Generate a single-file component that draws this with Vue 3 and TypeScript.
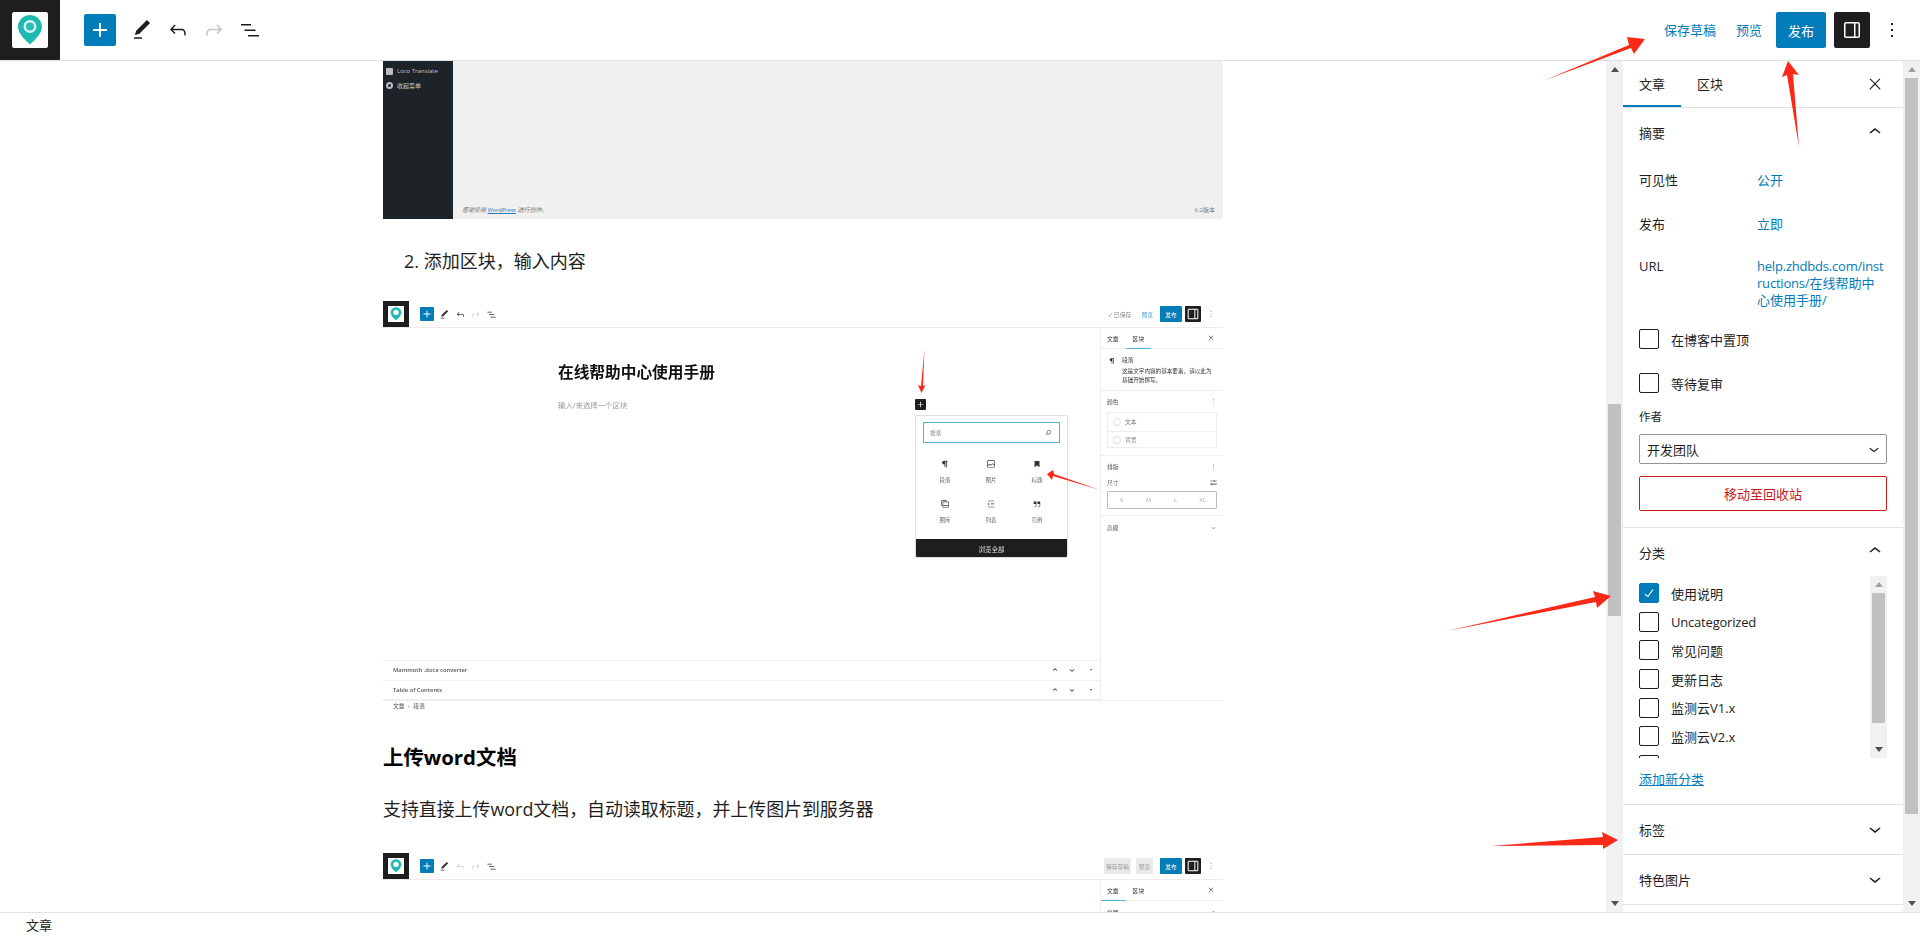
<script setup lang="ts">
const icons: Record<string, string> = {
  plus: 'M18 11.2h-5.2V6h-1.6v5.2H6v1.6h5.2V18h1.6v-5.2H18z',
  edit: 'M20.1 5.1L16.9 2 6.2 12.7l-1.3 4.4 4.5-1.3L20.1 5.1zM4 20.8h8v-1.5H4v1.5z',
  undo: 'M18.3 11.7c-.6-.6-1.4-.9-2.3-.9H6.7l2.9-3.3-1.1-1-4.5 5L8.5 16l1-1-2.7-2.7H16c.5 0 .9.2 1.3.5 1 1 1 3.4 1 4.5v.3h1.5v-.2c0-1.5 0-4.3-1.5-5.7z',
  redo: 'M15.6 6.5l-1.1 1 2.9 3.3H8c-.9 0-1.7.3-2.3.9-1.4 1.5-1.4 4.2-1.4 5.6v.2h1.5v-.3c0-1.1 0-3.5 1-4.5.3-.3.7-.5 1.3-.5h9.2L14.5 15l1.1 1.1 4.6-4.6-4.6-5z',
  list: 'M3 6h10v1.5H3V6zm3.5 5.500h11V13h-11v-1.500zM21 17H10v1.500h11V17z',
  panel: 'M18 4H6c-1.1 0-2 .9-2 2v12c0 1.1.9 2 2 2h12c1.1 0 2-.9 2-2V6c0-1.1-.9-2-2-2zm.5 14c0 .3-.2.5-.5.5H6c-.3 0-.5-.2-.5-.5V6c0-.3.2-.5.5-.5h8v13h1.5v-13H18c.3 0 .5.2.5.5v12z',
  kebab: 'M13 19h-2v-2h2v2zm0-6h-2v-2h2v2zm0-6h-2V5h2v2z',
  up: 'M6.5 12.4L12 8l5.5 4.4-.9 1.2L12 10l-4.5 3.6-1-1.2z',
  down: 'M17.5 11.6L12 16l-5.5-4.4.9-1.2L12 14l4.6-3.6 1 1.2z',
  close: 'M13 11.8l6.1-6.3-1-1-6.1 6.2-6.1-6.2-1 1 6.1 6.3-6.5 6.7 1 1 6.5-6.6 6.5 6.6 1-1z',
  check: 'M16.7 7.1l-6.3 8.5-3.3-2.5-.9 1.2 4.5 3.4L17.9 8z',
  search: 'M13 5c-3.3 0-6 2.7-6 6 0 1.4.5 2.7 1.3 3.7l-3.8 3.8 1 1 3.8-3.8c1 .8 2.3 1.3 3.7 1.3 3.3 0 6-2.7 6-6S16.3 5 13 5zm0 10.5c-2.5 0-4.5-2-4.5-4.5s2-4.5 4.5-4.5 4.5 2 4.5 4.5-2 4.5-4.5 4.5z',
  sliders: 'M3 7h10V5.5h2V7h6v1.5h-6V10h-2V8.5H3V7zm0 8.5h4V14h2v1.5h12V17H9v1.5H7V17H3v-1.5z',
  para: 'M18 4H9.5C7 4 5 6 5 8.5S7 13 9.5 13H11v7h2V6h2v14h2V6h1V4z',
  image: 'M19 3H5c-1.1 0-2 .9-2 2v14c0 1.1.9 2 2 2h14c1.1 0 2-.9 2-2V5c0-1.1-.9-2-2-2zM5 4.5h14c.3 0 .5.2.5.5v8.4l-3-2.9c-.3-.3-.8-.3-1 0L11.9 14 9 12c-.3-.2-.6-.2-.8 0l-3.6 2.6V5c-.1-.3.1-.5.4-.5zm14 15H5c-.3 0-.5-.2-.5-.5v-2.4l4.1-3 3 1.9c.3.2.7.2.9-.1L16 12l3.5 3.4V19c0 .3-.2.5-.5.5z',
  heading: 'M6 4.5v15l6-4 6 4v-15z',
  gallery: 'M16 3H5c-1.1 0-2 .9-2 2v11h1.5V5c0-.3.2-.5.5-.5h11V3zm3 3H8c-1.1 0-2 .9-2 2v11c0 1.1.9 2 2 2h11c1.1 0 2-.9 2-2V8c0-1.1-.9-2-2-2zm.5 13c0 .3-.2.5-.5.5H8c-.3 0-.5-.2-.5-.5v-3h12v3zm0-4.500h-12V8c0-.3.2-.5.5-.5h11c.3 0 .5.2.5.5v6.500z',
  listblock: 'M4 4v1.500h16V4H4zm8 8.500h8V11h-8v1.500zM4 20h16v-1.500H4V20zm4-8c0-1.100-.9-2-2-2s-2 .9-2 2 .9 2 2 2 2-.9 2-2z',
  quote: 'M13 6v6h5.200v4c0 .8-.2 1.400-.5 1.700-.6.6-1.600.6-2.500.5h-.3v1.500h.5c1 0 2.300-.1 3.300-1 .6-.6 1-1.600 1-2.700V6H13zm-9 6h5.200v4c0 .8-.2 1.400-.5 1.700-.6.6-1.600.6-2.500.5h-.3v1.500h.5c1 0 2.300-.1 3.300-1 .6-.6 1-1.600 1-2.700V6H4v6z',
}

const inserterItems = [
  { icon: 'para', label: '段落' },
  { icon: 'image', label: '图片' },
  { icon: 'heading', label: '标题' },
  { icon: 'gallery', label: '图库' },
  { icon: 'listblock', label: '列表' },
  { icon: 'quote', label: '引用' },
]
const categories = [
  { name: '使用说明', on: true },
  { name: 'Uncategorized', on: false },
  { name: '常见问题', on: false },
  { name: '更新日志', on: false },
  { name: '监测云V1.x', on: false },
  { name: '监测云V2.x', on: false },
  { name: '', on: false },
]
const sizes = ['S', 'M', 'L', 'XL']
const metaRows = ['Mammoth .docx converter', 'Table of Contents']
const arrows = [
  '1544,80.500 1629,45 1627,37 1645,39 1634,54 1631,48',
  '1799,147 1787,75 1782,77 1788,61 1799,75 1793,74',
  '1447,631 1595,597 1593,591 1611,596 1597,608 1596,602',
  '1491,846 1603,837 1602,832 1618,840 1603,849 1603,845',
  '924.500,349 923,386 925.500,385 921.500,393 918,385 921,386',
  '1100,490 1054,474 1053,470 1047,474 1052,480 1053,476',
]
</script>

<template>
  <div class="page">
    <header class="top">
      <div class="logo">
        <div class="logo-card">
          <svg viewBox="0 0 36 36" class="pin">
            <path d="M18 3c-6.600 0-12 5.300-12 11.800 0 7 7.500 13.500 12 17.700 4.500-4.200 12-10.700 12-17.700C30 8.300 24.600 3 18 3z" fill="#21b8b1" />
            <circle cx="18" cy="14.500" r="6.500" fill="#d8f3f1" />
            <circle cx="18" cy="14.500" r="4" fill="#2cbdb6" />
          </svg>
        </div>
      </div>
      <button class="add"><svg viewBox="0 0 24 24" class="i28"><path :d="icons.plus" /></svg></button>
      <span class="tool first"><svg viewBox="0 0 24 24" class="i24"><path :d="icons.edit" /></svg></span>
      <span class="tool"><svg viewBox="0 0 24 24" class="i24"><path :d="icons.undo" /></svg></span>
      <span class="tool off"><svg viewBox="0 0 24 24" class="i24"><path :d="icons.redo" /></svg></span>
      <span class="tool"><svg viewBox="0 0 24 24" class="i24"><path :d="icons.list" /></svg></span>
      <div class="top-right">
        <a class="link save">保存草稿</a>
        <a class="link preview">预览</a>
        <button class="publish">发布</button>
        <button class="panel-btn"><svg viewBox="0 0 24 24" class="i24"><path :d="icons.panel" /></svg></button>
        <span class="kebab"><svg viewBox="0 0 24 24" class="i24"><path :d="icons.kebab" /></svg></span>
      </div>
    </header>

    <main class="body">
      <section class="editor">
        <div class="column">
          <div class="shot1">
            <div class="s1-menu">
              <div class="s1-item"><i class="s1-dot sq"></i>Loco Translate</div>
              <div class="s1-item"><i class="s1-dot"></i>收起菜单</div>
            </div>
            <div class="s1-main">
              <span>感谢使用 <u>WordPress</u> 进行创作。</span>
              <span>6.2版本</span>
            </div>
          </div>

          <p class="step">2. 添加区块，输入内容</p>

          <div class="shot shot2">
            <div class="m-head">
              <div class="m-logo"><div class="m-card">
                <svg viewBox="0 0 36 36"><path d="M18 3c-6.600 0-12 5.300-12 11.800 0 7 7.500 13.500 12 17.700 4.500-4.200 12-10.700 12-17.700C30 8.300 24.600 3 18 3z" fill="#21b8b1" /><circle cx="18" cy="14.500" r="6" fill="#fff" /></svg>
              </div></div>
              <span class="m-add"><svg viewBox="0 0 24 24"><path :d="icons.plus" /></svg></span>
              <span class="m-tool first"><svg viewBox="0 0 24 24"><path :d="icons.edit" /></svg></span>
              <span class="m-tool"><svg viewBox="0 0 24 24"><path :d="icons.undo" /></svg></span>
              <span class="m-tool off"><svg viewBox="0 0 24 24"><path :d="icons.redo" /></svg></span>
              <span class="m-tool"><svg viewBox="0 0 24 24"><path :d="icons.list" /></svg></span>
              <div class="m-right">
                <span class="m-saved">✓ 已保存</span>
                <span class="m-link">预览</span>
                <span class="m-pub">发布</span>
                <span class="m-panel"><svg viewBox="0 0 24 24"><path :d="icons.panel" /></svg></span>
                <span class="m-kebab"><svg viewBox="0 0 24 24"><path :d="icons.kebab" /></svg></span>
              </div>
            </div>
            <div class="m-body">
              <div class="m-main">
                <h3 class="m-title">在线帮助中心使用手册</h3>
                <p class="m-hint">输入/来选择一个区块</p>
                <div class="m-meta">
                  <div v-for="row in metaRows" :key="row" class="m-row">
                    <b>{{ row }}</b>
                    <span class="m-row-ctl">
                      <svg viewBox="0 0 24 24"><path :d="icons.up" /></svg>
                      <svg viewBox="0 0 24 24"><path :d="icons.down" /></svg>
                      <i class="m-tri"></i>
                    </span>
                  </div>
                </div>
                <span class="m-float-add"><svg viewBox="0 0 24 24"><path :d="icons.plus" /></svg></span>
                <div class="m-pop">
                  <div class="m-search"><span>搜索</span><svg viewBox="0 0 24 24"><path :d="icons.search" /></svg></div>
                  <div class="m-grid">
                    <div v-for="item in inserterItems" :key="item.label" class="m-cell">
                      <svg viewBox="0 0 24 24"><path :d="icons[item.icon]" /></svg>
                      <span>{{ item.label }}</span>
                    </div>
                  </div>
                  <div class="m-browse">浏览全部</div>
                </div>
              </div>
              <aside class="m-side">
                <div class="m-tabs">
                  <span>文章</span><span class="on">区块</span>
                  <svg viewBox="0 0 24 24"><path :d="icons.close" /></svg>
                </div>
                <div class="m-card-block">
                  <svg viewBox="0 0 24 24"><path :d="icons.para" /></svg>
                  <div>
                    <div class="m-bname">段落</div>
                    <div class="m-bdesc">这是文字内容的基本要素，请以此为基础开始撰写。</div>
                  </div>
                </div>
                <div class="m-sec colors">
                  <div class="m-sec-h"><span>颜色</span><svg viewBox="0 0 24 24"><path :d="icons.kebab" /></svg></div>
                  <div class="m-colors">
                    <div><i></i>文本</div>
                    <div><i></i>背景</div>
                  </div>
                </div>
                <div class="m-sec type">
                  <div class="m-sec-h"><span>排版</span><svg viewBox="0 0 24 24"><path :d="icons.kebab" /></svg></div>
                  <div class="m-size-h"><span>尺寸</span><svg viewBox="0 0 24 24"><path :d="icons.sliders" /></svg></div>
                  <div class="m-sizes"><span v-for="s in sizes" :key="s">{{ s }}</span></div>
                </div>
                <div class="m-sec-h adv"><span>高级</span><svg viewBox="0 0 24 24"><path :d="icons.down" /></svg></div>
              </aside>
            </div>
            <div class="m-crumb">文章 <em>›</em> 段落</div>
          </div>

          <h2 class="h2">上传word文档</h2>
          <p class="para">支持直接上传word文档，自动读取标题，并上传图片到服务器</p>

          <div class="shot shot3">
            <div class="m-head">
              <div class="m-logo"><div class="m-card">
                <svg viewBox="0 0 36 36"><path d="M18 3c-6.600 0-12 5.300-12 11.800 0 7 7.500 13.500 12 17.700 4.500-4.200 12-10.700 12-17.700C30 8.300 24.600 3 18 3z" fill="#21b8b1" /><circle cx="18" cy="14.500" r="6" fill="#fff" /></svg>
              </div></div>
              <span class="m-add"><svg viewBox="0 0 24 24"><path :d="icons.plus" /></svg></span>
              <span class="m-tool first"><svg viewBox="0 0 24 24"><path :d="icons.edit" /></svg></span>
              <span class="m-tool off"><svg viewBox="0 0 24 24"><path :d="icons.undo" /></svg></span>
              <span class="m-tool off"><svg viewBox="0 0 24 24"><path :d="icons.redo" /></svg></span>
              <span class="m-tool"><svg viewBox="0 0 24 24"><path :d="icons.list" /></svg></span>
              <div class="m-right">
                <span class="m-grey wide">保存草稿</span>
                <span class="m-grey">预览</span>
                <span class="m-pub">发布</span>
                <span class="m-panel"><svg viewBox="0 0 24 24"><path :d="icons.panel" /></svg></span>
                <span class="m-kebab"><svg viewBox="0 0 24 24"><path :d="icons.kebab" /></svg></span>
              </div>
            </div>
            <div class="m-body">
              <div class="m-main"></div>
              <aside class="m-side">
                <div class="m-tabs first-on">
                  <span class="on">文章</span><span>区块</span>
                  <svg viewBox="0 0 24 24"><path :d="icons.close" /></svg>
                </div>
                <div class="m-sec-h adv"><span>摘要</span><svg viewBox="0 0 24 24"><path :d="icons.up" /></svg></div>
              </aside>
            </div>
          </div>
        </div>
      </section>

      <div class="sb editor-sb">
        <i class="tri-up dark"></i>
        <div class="thumb"></div>
        <i class="tri-down"></i>
      </div>

      <aside class="side">
        <div class="tabs">
          <span class="tab active">文章</span>
          <span class="tab">区块</span>
          <svg viewBox="0 0 24 24" class="tab-x"><path :d="icons.close" /></svg>
        </div>

        <section class="sec">
          <div class="sec-head"><span>摘要</span><svg viewBox="0 0 24 24" class="i24"><path :d="icons.up" /></svg></div>
          <div class="kv"><span>可见性</span><a>公开</a></div>
          <div class="kv"><span>发布</span><a>立即</a></div>
          <div class="kv url"><span>URL</span><a><em>help.zhdbds.com/inst</em><br /><em>ructions/</em>在线帮助中<br />心使用手册/</a></div>
          <label class="chk pin-row"><i class="box"></i>在博客中置顶</label>
          <label class="chk review-row"><i class="box"></i>等待复审</label>
          <div class="author-l">作者</div>
          <div class="select">开发团队<svg viewBox="0 0 24 24"><path :d="icons.down" /></svg></div>
          <button class="trash">移动至回收站</button>
        </section>

        <section class="sec cat">
          <div class="sec-head short"><span>分类</span><svg viewBox="0 0 24 24" class="i24"><path :d="icons.up" /></svg></div>
          <div class="cat-box">
            <div class="cat-list">
              <label v-for="(c, i) in categories" :key="i" class="chk cat-row" :class="{ latin: c.name === 'Uncategorized' }">
                <i class="box" :class="{ on: c.on }">
                  <svg v-if="c.on" viewBox="0 0 24 24"><path :d="icons.check" /></svg>
                </i>{{ c.name }}
              </label>
            </div>
            <div class="sb list-sb">
              <i class="tri-up"></i>
              <div class="thumb"></div>
              <i class="tri-down"></i>
            </div>
          </div>
          <a class="add-cat">添加新分类</a>
        </section>

        <section class="sec closed"><span>标签</span><svg viewBox="0 0 24 24" class="i24"><path :d="icons.down" /></svg></section>
        <section class="sec closed"><span>特色图片</span><svg viewBox="0 0 24 24" class="i24"><path :d="icons.down" /></svg></section>
      </aside>

      <div class="sb side-sb">
        <i class="tri-up"></i>
        <div class="thumb"></div>
        <i class="tri-down"></i>
      </div>
    </main>

    <footer class="status">文章</footer>

    <svg class="arrows" viewBox="0 0 1920 937">
      <polygon v-for="(a, i) in arrows" :key="i" :points="a" fill="#fb2a18" />
    </svg>
  </div>
</template>

<style>
html, body { margin: 0; padding: 0; background: #fff; }
</style>

<style scoped>
* { box-sizing: border-box; }
.page {
  position: relative;
  width: 1920px;
  height: 937px;
  overflow: hidden;
  display: flex;
  flex-direction: column;
  background: #fff;
  color: #1e1e1e;
  font-family: "Open Sans", "Noto Sans CJK SC", sans-serif;
  font-size: 13px;
}
svg { display: block; fill: currentColor; }
i { display: block; font-style: normal; }
button { font-family: inherit; border: 0; padding: 0; }
.i24 { width: 24px; height: 24px; flex: none; }
.i28 { width: 28px; height: 28px; }

/* top bar */
.top { flex: 0 0 61px; display: flex; align-items: center; border-bottom: 1px solid #e0e0e0; }
.logo { width: 60px; height: 60px; background: #1e1e1e; display: flex; align-items: center; justify-content: center; }
.logo-card { width: 36px; height: 36px; background: #fff; border-radius: 2px; }
.pin { width: 36px; height: 36px; }
.add { width: 32px; height: 32px; margin-left: 24px; background: #007cba; color: #fff; border-radius: 2px; display: flex; align-items: center; justify-content: center; }
.tool { width: 36px; height: 36px; display: flex; align-items: center; justify-content: center; color: #1e1e1e; }
.tool.first { margin-left: 8px; }
.tool.off { color: #c4c4c4; }
.top-right { margin-left: auto; display: flex; align-items: center; padding-right: 16px; }
.link { color: #007cba; padding-bottom: 2px; }
.preview { margin-left: 20px; }
.publish { width: 50px; height: 36px; margin-left: 14px; background: #007cba; color: #fff; font-size: 13px; border-radius: 2px; }
.panel-btn { width: 36px; height: 36px; margin-left: 8px; background: #1e1e1e; color: #fff; border-radius: 2px; display: flex; align-items: center; justify-content: center; }
.kebab { width: 24px; margin-left: 10px; color: #1e1e1e; }

/* body */
.body { flex: 0 0 851px; display: flex; min-height: 0; }
.editor { flex: 1; min-width: 0; overflow: hidden; }
.column { width: 840px; margin-left: 383px; }

/* scrollbars */
.sb { width: 17px; flex: 0 0 17px; background: #f1f1f1; display: flex; flex-direction: column; align-items: center; }
.thumb { width: 13px; background: #c1c1c1; }
.tri-up, .tri-down { width: 0; height: 0; border-left: 4.500px solid transparent; border-right: 4.500px solid transparent; }
.tri-up { border-bottom: 5px solid #a3a3a3; margin-top: 6px; margin-bottom: 6px; }
.tri-up.dark { border-bottom-color: #505050; }
.tri-down { border-top: 5px solid #505050; margin-top: auto; margin-bottom: 6px; }
.editor-sb .thumb { height: 212px; margin-top: 326px; }
.side-sb .thumb { height: 736px; }
.list-sb .thumb { height: 130px; }

/* first screenshot */
.shot1 { height: 158px; display: flex; }
.s1-menu { width: 70px; background: #1d2327; color: #c3c7ca; font-size: 6px; padding-top: 3px; }
.s1-item { height: 14px; display: flex; align-items: center; gap: 4px; padding-left: 3px; white-space: nowrap; }
.s1-dot { width: 7px; height: 7px; border-radius: 50%; background: #b9bdc0; flex: none; border: 2px solid #b9bdc0; }
.s1-dot:not(.sq) { background: #1d2327; }
.s1-dot.sq { border-radius: 1px; }
.s1-main { flex: 1; background: #f0f0f0; display: flex; align-items: flex-end; justify-content: space-between; padding: 0 8px 5px 9px; color: #777; font-size: 6px; }
.s1-main span:first-child { font-style: italic; }
.s1-main u { color: #2a79b8; }

.step { margin: 26px 0 24px; height: 32px; line-height: 32px; padding-left: 21px; font-size: 18px; }
.h2 { margin: 30px 0 0; height: 30px; line-height: 30px; font-size: 20.400px; font-weight: 700; color: #000; }
.para { margin: 21px 0 28px; height: 32px; line-height: 32px; font-size: 17.920px; }

/* nested screenshots */
.shot { width: 840px; filter: blur(0.4px); color: #333; font-size: 5.800px; }
.shot2 { height: 411px; display: flex; flex-direction: column; }
.shot3 { height: 70px; display: flex; flex-direction: column; overflow: hidden; }
.m-head { flex: 0 0 27px; display: flex; align-items: center; border-bottom: 1px solid #ececec; }
.m-logo { width: 26px; height: 26px; background: #1e1e1e; display: flex; align-items: center; justify-content: center; }
.m-card { width: 16px; height: 16px; background: #fff; }
.m-add { width: 14px; height: 14px; margin-left: 11px; background: #007cba; color: #fff; border-radius: 1px; }
.m-tool { width: 15.500px; display: flex; justify-content: center; color: #333; }
.m-tool svg { width: 11px; height: 11px; }
.m-tool.first { margin-left: 3px; }
.m-tool.off { color: #ccc; }
.m-right { margin-left: auto; display: flex; align-items: center; padding-right: 7px; }
.m-saved { width: 25px; white-space: nowrap; color: #888; }
.m-link { margin-left: 8px; color: #3b9ad2; }
.m-pub { width: 22px; height: 16px; margin-left: 7px; background: #007cba; color: #fff; border-radius: 1px; display: flex; align-items: center; justify-content: center; }
.m-panel { width: 16px; height: 16px; margin-left: 3px; background: #1e1e1e; color: #fff; border-radius: 1px; }
.m-kebab { width: 10px; height: 10px; margin-left: 5px; color: #888; }
.m-grey { width: 17px; height: 16px; margin-left: 5px; background: #eaeaea; color: #999; display: flex; align-items: center; justify-content: center; white-space: nowrap; }
.m-grey.wide { width: 27px; margin-left: 0; }

.m-body { flex: 1; min-height: 0; display: flex; }
.m-main { position: relative; flex: 1; min-width: 0; display: flex; flex-direction: column; }
.m-title { margin: 33px 0 0 175px; font-size: 15.700px; line-height: 22px; font-weight: 700; color: #111; }
.m-hint { margin: 17px 0 0 175px; font-size: 7.400px; line-height: 10px; color: #999; }
.m-meta { margin-top: auto; border-bottom: 1px solid #eee; }
.m-row { height: 19.500px; border-top: 1px solid #eee; display: flex; align-items: center; justify-content: space-between; padding: 0 8px 0 10px; font-size: 5.800px; color: #555; }
.m-row b { font-weight: 600; }
.m-row-ctl { display: flex; align-items: center; gap: 7px; color: #222; }
.m-row-ctl svg { width: 10px; height: 10px; }
.m-tri { width: 0; height: 0; border-left: 1.500px solid transparent; border-right: 1.500px solid transparent; border-top: 2.500px solid #555; margin-left: 6px; }
.m-float-add { position: absolute; left: 532px; top: 71px; width: 11px; height: 11px; background: #1e1e1e; color: #fff; border-radius: 1px; }
.m-pop { position: absolute; left: 532px; top: 87px; width: 153px; height: 143px; background: #fff; border: 1px solid #ddd; border-radius: 2px; display: flex; flex-direction: column; overflow: hidden; }
.m-search { margin: 6px 7px 0; height: 21px; flex: none; border: 1px solid #55b0dd; display: flex; align-items: center; justify-content: space-between; padding: 0 6px; color: #888; }
.m-search svg { width: 9px; height: 9px; color: #333; }
.m-grid { margin: 16px 6px 0; display: grid; grid-template-columns: repeat(3, 46px); grid-auto-rows: 40px; }
.m-cell { display: flex; flex-direction: column; align-items: center; gap: 7px; color: #666; font-size: 5.500px; }
.m-cell svg { width: 10px; height: 10px; color: #333; }
.m-browse { margin-top: auto; height: 20px; flex: none; background: #1e1e1e; color: #ddd; font-size: 6.500px; display: flex; align-items: center; justify-content: center; }

.m-side { flex: 0 0 123px; border-left: 1px solid #eee; }
.m-tabs { position: relative; height: 21px; display: flex; align-items: center; gap: 14px; padding-left: 6px; border-bottom: 1px solid #eee; }
.m-tabs span.on::after { content: ""; position: absolute; left: 25px; bottom: -1px; width: 25px; height: 1px; background: #58b0dd; }
.m-tabs.first-on span.on::after { left: 0; }
.m-tabs svg { position: absolute; right: 8px; top: 6px; width: 8px; height: 8px; }
.m-card-block { height: 42px; display: flex; gap: 6px; padding: 6px 6px 0 7px; border-bottom: 1px solid #eee; }
.m-card-block > svg { width: 8px; height: 8px; flex: none; margin-top: 2px; }
.m-bname { line-height: 10px; }
.m-bdesc { margin-top: 2px; width: 94px; line-height: 9px; font-size: 5.600px; }
.m-sec { padding: 0 6px; border-bottom: 1px solid #eee; }
.m-sec.colors { height: 65px; }
.m-sec.type { height: 60px; }
.m-sec-h { height: 21px; display: flex; align-items: center; justify-content: space-between; color: #555; }
.m-sec-h svg { width: 9px; height: 9px; margin-right: -1px; color: #777; }
.m-sec-h.adv { padding: 0 6px; height: 22px; }
.m-colors { height: 36px; border: 1px solid #eee; }
.m-colors div { height: 17.500px; display: flex; align-items: center; gap: 4px; padding-left: 5px; color: #777; }
.m-colors div + div { border-top: 1px solid #eee; }
.m-colors i { width: 8px; height: 8px; border-radius: 50%; border: 1px solid #ddd; }
.m-size-h { margin-top: -1px; height: 12px; display: flex; align-items: center; justify-content: space-between; color: #777; }
.m-size-h svg { width: 9px; height: 9px; color: #333; margin-right: -1px; }
.m-sizes { margin-top: 3px; height: 18px; width: 110px; border: 1px solid #bbb; border-radius: 1px; display: grid; grid-template-columns: repeat(4, 1fr); align-items: center; justify-items: center; color: #aaa; }
.m-crumb { flex: 0 0 12px; border-top: 1px solid #eee; padding-left: 10px; line-height: 11px; color: #555; }
.m-crumb em { font-style: normal; margin: 0 2px; }

/* sidebar */
.side { flex: 0 0 280px; width: 280px; overflow: hidden; background: #fff; }
.tabs { height: 47px; display: flex; align-items: stretch; border-bottom: 1px solid #e0e0e0; }
.tab { width: 58px; display: flex; align-items: center; justify-content: center; padding-bottom: 2px; }
.tab.active { box-shadow: inset 0 -2px 0 #007cba; }
.tab-x { width: 18px; height: 18px; margin: 14px 19px 0 auto; }
.sec { border-bottom: 1px solid #e0e0e0; padding: 0 16px; }
.sec-head { height: 50px; display: flex; align-items: center; justify-content: space-between; }
.sec-head > span { margin-bottom: 2px; }
.sec-head.short { height: 48px; }
.sec-head.short > span { margin-bottom: 0; }
.sec-head svg, .closed svg { margin-top: -2px; }
.kv { height: 44px; display: flex; align-items: center; padding-bottom: 2px; }
.kv span { width: 118px; flex: none; }
.kv a { color: #007cba; }
.kv.url { height: auto; align-items: flex-start; padding: 12px 0 0; line-height: 17px; }
.kv.url a { white-space: nowrap; }
.kv.url em { font-style: normal; letter-spacing: -0.2px; }
.chk { display: flex; align-items: center; }
.latin { letter-spacing: -0.2px; }
.box { width: 20px; height: 20px; flex: none; border: 1px solid #1e1e1e; border-radius: 2px; margin-right: 12px; background: #fff; color: #fff; }
.box.on { background: #007cba; border-color: #007cba; }
.box svg { width: 18px; height: 18px; }
.pin-row { margin-top: 20px; }
.review-row { margin-top: 24px; }
.author-l { margin-top: 16px; height: 16px; line-height: 16px; font-size: 11.500px; }
.select { margin-top: 9px; width: 248px; height: 30px; border: 1px solid #949494; border-radius: 2px; display: flex; align-items: center; justify-content: space-between; padding: 0 2px 0 7px; }
.select svg { width: 20px; height: 20px; }
.trash { display: block; margin: 12px 0 16px; width: 248px; height: 35px; background: #fff; border: 1px solid #cc1818; border-radius: 2px; color: #cc1818; font-size: 13px; }
.cat { padding-bottom: 17px; }
.cat-box { width: 248px; height: 182px; display: flex; overflow: hidden; }
.cat-list { flex: 1; display: flex; flex-direction: column; gap: 8.700px; padding-top: 7px; }
.cat-row { height: 20px; flex: none; }
.add-cat { display: block; margin-top: 13px; height: 16px; line-height: 16px; color: #007cba; text-decoration: underline; }
.closed { height: 50px; display: flex; align-items: center; justify-content: space-between; }

.status { flex: 0 0 25px; border-top: 1px solid #e0e0e0; padding-left: 26px; line-height: 24px; }
.arrows { position: absolute; left: 0; top: 0; width: 1920px; height: 937px; pointer-events: none; }
</style>
